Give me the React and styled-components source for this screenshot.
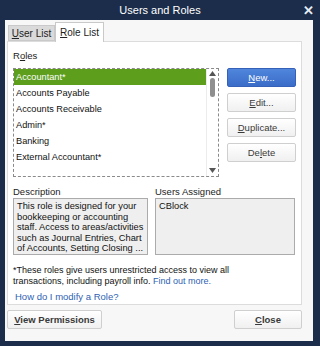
import React from "react";
import styled, { createGlobalStyle } from "styled-components";

const Global = createGlobalStyle`
  html, body { margin: 0; padding: 0; background: #1b2d4a; }
  body { font-family: "Liberation Sans", Arial, sans-serif; }
`;

const Frame = styled.div`
  width: 320px;
  height: 346px;
  background: #1b2d4a;
  display: flex;
  flex-direction: column;
  box-sizing: border-box;
  padding: 0 7px 5px 5px;
`;

const TitleBar = styled.div`
  height: 20px;
  display: flex;
  align-items: center;
  justify-content: center;
  position: relative;
  color: #fff;
  font-size: 11px;
  margin: 0 -7px 0 -5px;
`;

const CloseX = styled.span`
  position: absolute;
  right: 6px;
  top: 3px;
  font-size: 13px;
  font-weight: bold;
  color: #e8ecf2;
`;

const Body = styled.div`
  flex: 1;
  background: #f7f7f7;
  display: flex;
  flex-direction: column;
  padding: 2px 11px 0 2px;
`;

const Tabs = styled.div`
  display: flex;
  align-items: flex-end;
  height: 19px;
  padding-left: 1px;
`;

const Tab = styled.div`
  font-size: 10px;
  color: #222;
  box-sizing: border-box;
  border: 1px solid #c9c9c9;
  border-bottom: ${(p) => (p.$active ? "none" : "1px solid #c9c9c9")};
  background: ${(p) => (p.$active ? "#fff" : "#dadada")};
  height: ${(p) => (p.$active ? "20px" : "16px")};
  width: ${(p) => (p.$active ? "49px" : "47px")};
  margin-bottom: ${(p) => (p.$active ? "-1px" : "0")};
  display: flex;
  align-items: center;
  justify-content: center;
  position: relative;
  z-index: ${(p) => (p.$active ? 1 : 0)};
`;

const U = styled.span`
  text-decoration: underline;
  text-underline-offset: 1px;
`;

const Panel = styled.div`
  background: #fff;
  border: 1px solid #dcdcdc;
  height: 264px;
  box-sizing: border-box;
  padding: 8px 0 0 5px;
  display: flex;
  flex-direction: column;
`;

const Label = styled.div`
  font-size: 9.5px;
  color: #222;
  height: 11px;
  line-height: 11px;
`;

const TopRow = styled.div`
  display: flex;
  gap: 8px;
  margin-top: 7px;
`;

const ListBox = styled.div`
  width: 206px;
  height: 109px;
  box-sizing: border-box;
  border: 1px dashed #8a8a8a;
  display: flex;
  overflow: hidden;
`;

const Items = styled.div`
  flex: 1;
  display: flex;
  flex-direction: column;
`;

const Item = styled.div`
  height: 16px;
  line-height: 16px;
  font-size: 9.2px;
  padding-left: 2px;
  color: ${(p) => (p.$sel ? "#fff" : "#111")};
  background: ${(p) => (p.$sel ? "#5d9e1d" : "transparent")};
`;

const ScrollBar = styled.div`
  width: 11px;
  display: flex;
  flex-direction: column;
  align-items: center;
  justify-content: space-between;
  padding: 2px 0 3px;
  border-left: 1px solid #ececec;
`;

const Thumb = styled.div`
  width: 5px;
  height: 19px;
  border-radius: 3px;
  background: #8f8f8f;
  margin-top: 2px;
`;

const Spacer = styled.div`
  flex: 1;
`;

const ButtonCol = styled.div`
  display: flex;
  flex-direction: column;
  gap: 6px;
`;

const Btn = styled.div`
  width: ${(p) => p.$w || 69}px;
  height: 19px;
  box-sizing: border-box;
  border-radius: 2px;
  display: flex;
  align-items: center;
  justify-content: center;
  font-size: 9.5px;
  border: 1px solid ${(p) => (p.$primary ? "#3562b8" : "#cfcfcf")};
  color: ${(p) => (p.$primary ? "#fff" : "#3a3a3a")};
  font-weight: ${(p) => (p.$bold ? "bold" : "normal")};
  background: ${(p) =>
    p.$primary
      ? "linear-gradient(#5086dc, #3a6cc8)"
      : "linear-gradient(#ffffff, #f0f0f0)"};
`;

const MidRow = styled.div`
  display: flex;
  gap: 7px;
  margin-top: 9px;
`;

const Col = styled.div`
  display: flex;
  flex-direction: column;
  gap: 1px;
`;

const InfoBox = styled.div`
  width: ${(p) => p.$w}px;
  height: 57px;
  box-sizing: border-box;
  background: #efefef;
  border: 1px solid #ababab;
  font-size: 9.3px;
  line-height: 10.5px;
  padding: 2px 3px;
  color: #111;
  overflow: hidden;
`;

const Note = styled.div`
  font-size: 9px;
  line-height: 11px;
  color: #111;
  margin-top: 10px;
`;

const Link = styled.span`
  color: #2e5fb3;
`;

const HowLink = styled.div`
  font-size: 9.5px;
  color: #2e5fb3;
  margin: 4px 0 0 2px;
`;

const Footer = styled.div`
  display: flex;
  justify-content: space-between;
  padding-top: 5px;
`;

const roles = [
  "Accountant*",
  "Accounts Payable",
  "Accounts Receivable",
  "Admin*",
  "Banking",
  "External Accountant*",
];

const Arrow = ({ up }) => (
  <svg width="7" height="5" viewBox="0 0 7 5">
    <polygon points={up ? "3.5,0 7,5 0,5" : "0,0 7,0 3.5,5"} fill="#555" />
  </svg>
);

export default function App() {
  return (
    <>
      <Global />
      <Frame>
        <TitleBar>
          Users and Roles
          <CloseX>✕</CloseX>
        </TitleBar>
        <Body>
          <Tabs>
            <Tab>
              <span>
                <U>U</U>ser List
              </span>
            </Tab>
            <Tab $active>
              <span>
                <U>R</U>ole List
              </span>
            </Tab>
          </Tabs>
          <Panel>
            <Label>
              R<U>o</U>les
            </Label>
            <TopRow>
              <ListBox>
                <Items>
                  {roles.map((r, i) => (
                    <Item key={r} $sel={i === 0}>
                      {r}
                    </Item>
                  ))}
                </Items>
                <ScrollBar>
                  <Arrow up />
                  <Thumb />
                  <Spacer />
                  <Arrow />
                </ScrollBar>
              </ListBox>
              <ButtonCol>
                <Btn $primary>
                  <span>
                    <U>N</U>ew...
                  </span>
                </Btn>
                <Btn>
                  <span>
                    <U>E</U>dit...
                  </span>
                </Btn>
                <Btn>
                  <span>
                    <U>D</U>uplicate...
                  </span>
                </Btn>
                <Btn>
                  <span>
                    De<U>l</U>ete
                  </span>
                </Btn>
              </ButtonCol>
            </TopRow>
            <MidRow>
              <Col>
                <Label>Description</Label>
                <InfoBox $w={135}>
                  This role is designed for your bookkeeping or accounting
                  staff. Access to areas/activities such as Journal Entries,
                  Chart of Accounts, Setting Closing ...
                </InfoBox>
              </Col>
              <Col>
                <Label>Users Assigned</Label>
                <InfoBox $w={140}>CBlock</InfoBox>
              </Col>
            </MidRow>
            <Note>
              *These roles give users unrestricted access to view all
              <br />
              transactions, including payroll info. <Link>Find out more.</Link>
            </Note>
            <HowLink>How do I modify a Role?</HowLink>
          </Panel>
          <Footer>
            <Btn $w={95} $bold>
              <span>
                <U>V</U>iew Permissions
              </span>
            </Btn>
            <Btn $w={68} $bold>
              <span>
                <U>C</U>lose
              </span>
            </Btn>
          </Footer>
        </Body>
      </Frame>
    </>
  );
}
